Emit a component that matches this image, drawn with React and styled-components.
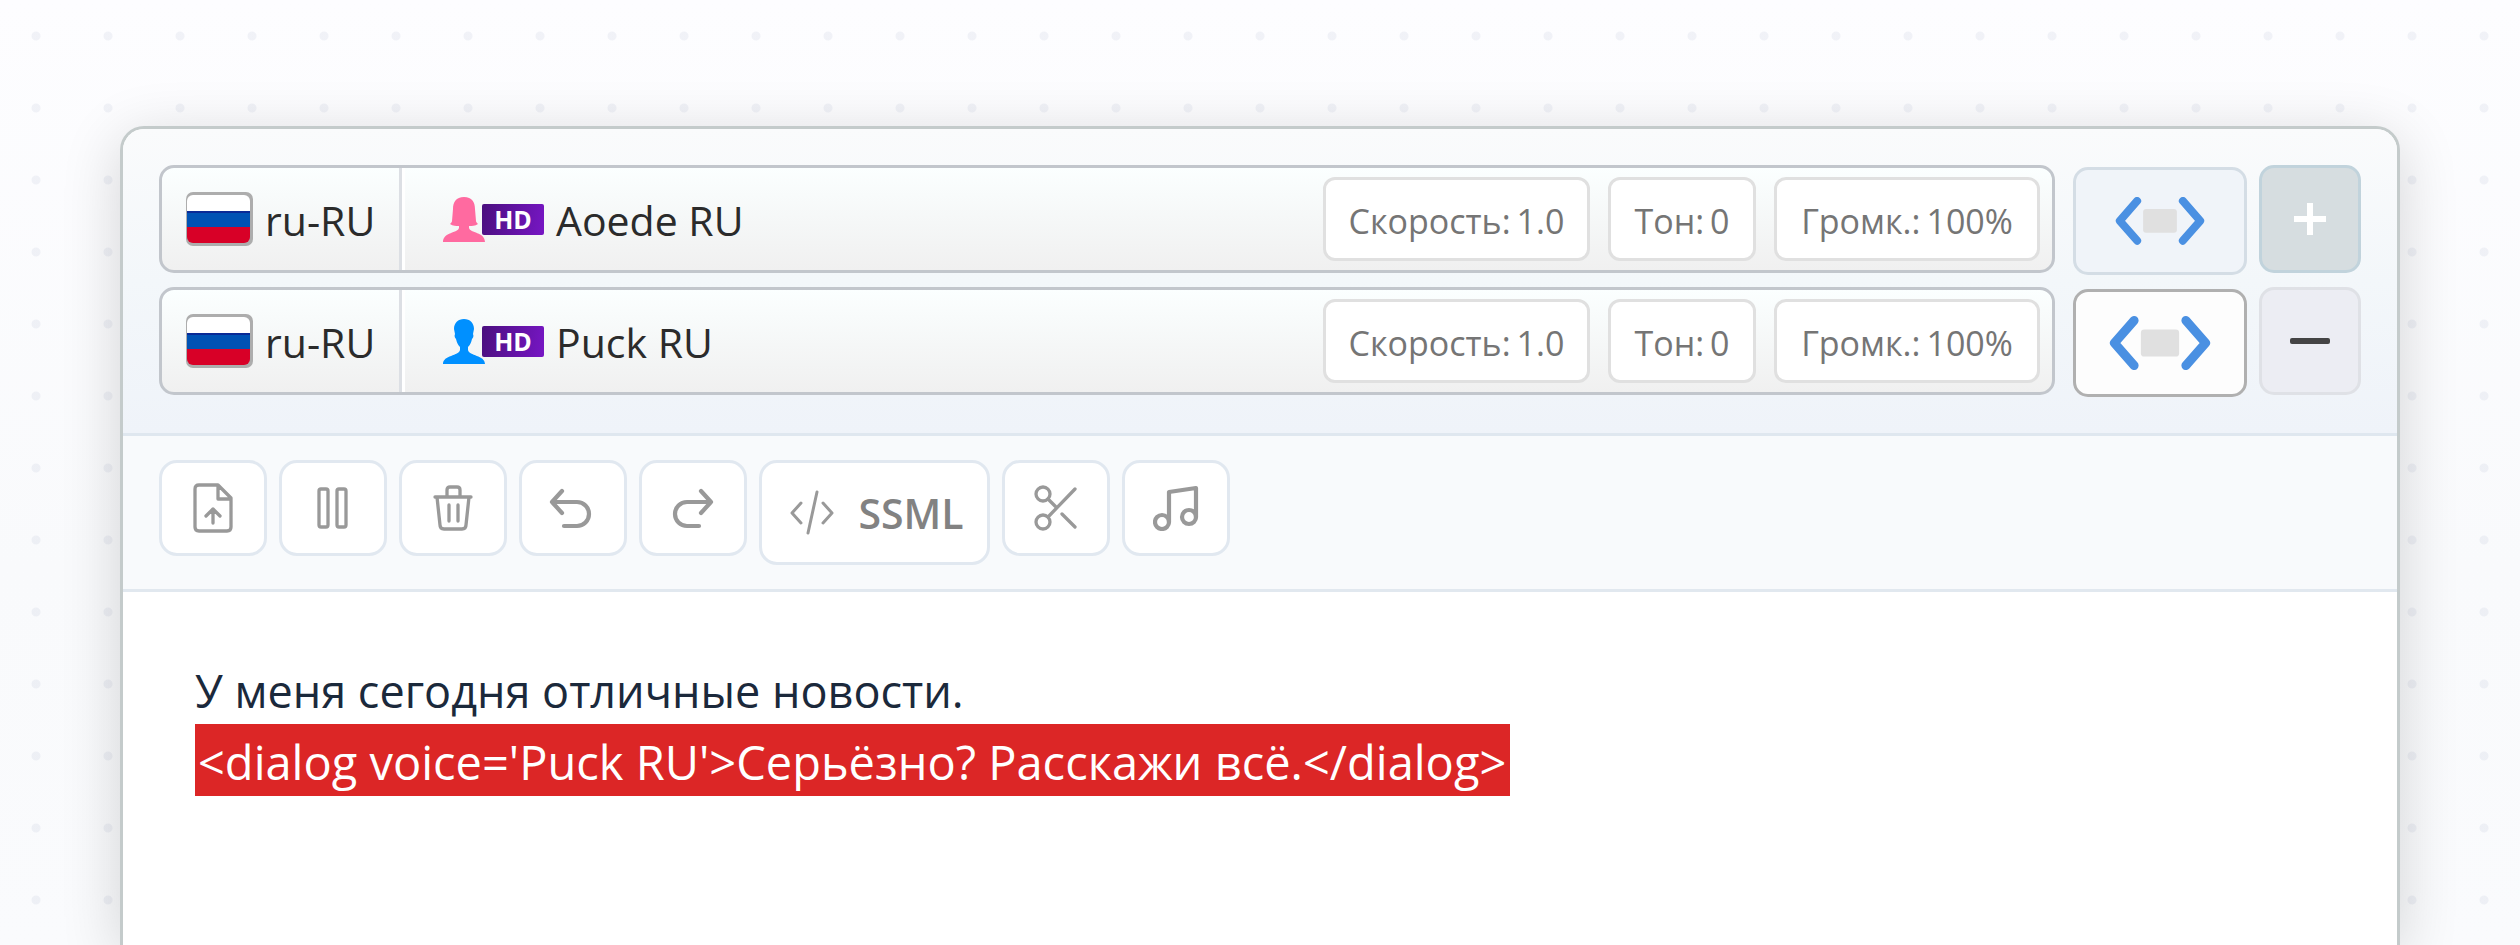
import styled, { createGlobalStyle } from "styled-components"

const GlobalStyle = createGlobalStyle`
  * {
    box-sizing: border-box;
  }
  body {
    margin: 0;
    font-family: "Open Sans", "Noto Sans", sans-serif;
    background: #fff;
  }
`
const Page = styled.div`
  min-height: 100vh;
  padding: 126px 120px 0;
  display: flex;
  background:
    radial-gradient(circle, rgba(100, 116, 160, 0.08) 4px, transparent 5px) 0 0 / 72px 72px,
    linear-gradient(180deg, #fdfdff 0%, #f9fafc 60%, #fafbfd 100%);
`
const Panel = styled.main`
  flex: 1;
  display: flex;
  flex-direction: column;
  border: 3px solid #c4cbcb;
  border-bottom: none;
  border-radius: 24px 24px 0 0;
  background: #fff;
  box-shadow: 0 12px 60px rgba(0, 0, 0, 0.16);
  overflow: hidden;
`
const Voices = styled.section`
  display: flex;
  flex-direction: column;
  gap: 12px;
  padding: 36px;
  border-bottom: 3px solid #dfe7ef;
  background: linear-gradient(180deg, #fafbfc 0%, #f3f7fa 50%, #eff3f9 100%);
`
const VoiceRow = styled.div`
  display: flex;
  align-items: flex-start;
`
const VoiceBox = styled.div`
  flex: 1;
  height: 108px;
  display: flex;
  align-items: stretch;
  margin-right: 18px;
  border: 3px solid #c2c6cc;
  border-radius: 15px;
  background: linear-gradient(180deg, #fbffff 0%, #f0f0f0 100%);
`
const Picker = styled.button`
  display: flex;
  align-items: center;
  padding: 0;
  border: none;
  background: none;
  font-family: inherit;
  font-size: 41px;
  line-height: 54px;
  color: #2b2b2b;
  cursor: pointer;
`
const Language = styled(Picker)`
  width: 240px;
  gap: 12px;
  padding-left: 24px;
  border-right: 3px solid #dcdfe4;
`
const Voice = styled(Picker)`
  flex: 1;
  gap: 12px;
  padding-left: 38px;
  border-left: 3px solid #fff;
`
const PickerText = styled.span`
  padding-top: 2px;
`
const Badges = styled.span`
  display: flex;
  align-items: center;
`
const HdBadge = styled.span`
  width: 62px;
  height: 31px;
  margin-left: -3px;
  border-radius: 2px;
  background: linear-gradient(100deg, #4a0f7e, #7716c4);
  color: #fff;
  font-size: 25px;
  line-height: 31px;
  font-weight: 700;
  text-align: center;
`
const Params = styled.div`
  display: flex;
  align-items: center;
  gap: 18px;
  padding-right: 12px;
`
const Param = styled.button`
  width: ${(props) => props.$width}px;
  height: 84px;
  padding: 3px 0 0;
  display: flex;
  align-items: center;
  justify-content: center;
  gap: 6px;
  border: 3px solid #e0e0e0;
  border-radius: 12px;
  background: #fff;
  color: #757575;
  font-family: inherit;
  font-size: 34px;
  line-height: 48px;
  white-space: nowrap;
  cursor: pointer;
`
const TagButton = styled.button`
  width: 174px;
  height: 108px;
  margin: 2px 12px 0 0;
  padding: 0;
  display: flex;
  align-items: center;
  justify-content: center;
  border: 3px solid ${(props) => (props.$active ? "#b0b0b0" : "#d4dde5")};
  border-radius: 15px;
  background: ${(props) => (props.$active ? "#fdfdfd" : "#f0f4f9")};
  cursor: pointer;
`
const RowButton = styled.button`
  width: 102px;
  height: 108px;
  padding: 0;
  display: flex;
  align-items: center;
  justify-content: center;
  border: 3px solid ${(props) => (props.$add ? "#c1d3dc" : "#dfe1e6")};
  border-radius: 15px;
  background: ${(props) => (props.$add ? "#d6dde0" : "#ecedf3")};
  cursor: pointer;
`
const Toolbar = styled.nav`
  display: flex;
  align-items: flex-start;
  gap: 12px;
  padding: 24px 36px;
  border-bottom: 3px solid #e1e8ef;
  background: #f8fafc;
`
const Tool = styled.button`
  width: ${(props) => (props.$wide ? 231 : 108)}px;
  height: ${(props) => (props.$wide ? 105 : 96)}px;
  padding: 0 0 0 ${(props) => (props.$wide ? 5 : 0)}px;
  display: flex;
  align-items: center;
  justify-content: center;
  gap: 24px;
  border: 3px solid #e1e8f0;
  border-radius: 18px;
  background: #fff;
  color: #828282;
  font-family: inherit;
  font-size: 41px;
  font-weight: 600;
  cursor: pointer;
`
const Editor = styled.div`
  flex: 1;
  padding: 60px 72px;
  font-size: 45px;
  line-height: 67px;
  color: #1b293b;
  outline: none;
`
const Line = styled.p`
  margin: 0;
  display: flex;
`
const LineText = styled.span`
  padding: 5px 0 0;
`
const DialogTag = styled.mark`
  padding: 5px 4px 0 3px;
  background: #dc2626;
  color: #fff;
  font-size: 47px;
`

const Flag = () => (
  <svg width="67" height="54" viewBox="0 0 67 54">
    <rect width="67" height="54" rx="7" fill="#adadad" />
    <clipPath id="flag">
      <rect x="1" y="3" width="63" height="48" rx="6" />
    </clipPath>
    <g clipPath="url(#flag)">
      <rect width="67" height="19" fill="#fff" />
      <rect y="19" width="67" height="17" fill="#0052b4" />
      <rect y="19" width="67" height="2" fill="#0a2a96" />
      <rect y="35" width="67" height="19" fill="#d80027" />
    </g>
  </svg>
)

const Female = () => (
  <svg width="42" height="46" viewBox="0 0 42 46">
    <path
      fill="#ff6aa0"
      d="M21 1c8 0 11 5 11 12l1 12c0 1 1 2 2 3-3 2-6 2-9 2v2c1 5 16 4 16 14H0c0-10 15-9 16-14v-2c-3 0-6 0-9-2 1-1 2-2 2-3l1-12C10 6 13 1 21 1z"
    />
  </svg>
)

const Male = () => (
  <svg width="42" height="46" viewBox="0 0 42 46">
    <path
      fill="#0090ff"
      d="M21 1c6 0 10 4 10 10l-1 5c1 2 0 4-1 5-1 4-2 6-4 8v3c1 6 17 5 17 14H0c0-9 16-8 17-14v-3c-2-2-3-4-4-8-1-1-2-3-1-5l-1-5C11 5 15 1 21 1z"
    />
  </svg>
)

const TagIcon = ({ size }) => (
  <svg width={size} height={size * 0.53} viewBox="0 0 90 48">
    <path
      d="M22 4 4.500 24 22 44M68 4 85.500 24 68 44"
      fill="none"
      stroke="#4a90e2"
      strokeWidth="8"
      strokeLinecap="round"
      strokeLinejoin="round"
    />
    <rect x="28" y="12" width="34" height="24" rx="3" fill="#e0e0e0" />
  </svg>
)

const Icon = ({ width = 40, height = 50, stroke = 3, children }) => (
  <svg
    width={width}
    height={height}
    viewBox={`0 0 ${width} ${height}`}
    fill="none"
    stroke="#999"
    strokeWidth={stroke}
    strokeLinecap="round"
    strokeLinejoin="round"
  >
    {children}
  </svg>
)

const tools = [
  {
    label: "Загрузить файл",
    icon: (
      <Icon stroke={3.3}>
        <path d="M25 2H6Q2 2 2 6V44Q2 48 6 48H34Q38 48 38 44V15ZV16H38M20 40V26M13 33l7-7 7 7" />
      </Icon>
    ),
  },
  {
    label: "Пауза",
    icon: (
      <Icon width={32} height={42} stroke={3.3}>
        <rect x="2" y="2" width="9" height="38" rx="2" />
        <rect x="20" y="2" width="9" height="38" rx="2" />
      </Icon>
    ),
  },
  {
    label: "Удалить",
    icon: (
      <Icon height={46} stroke={3.3}>
        <path d="M2 12H38M14 12V5Q14 2 17 2H24Q27 2 27 5V12M4 12l3 28q0 4 4 4H29q4 0 4-4l3-28M16 20V36M25 20V36" />
      </Icon>
    ),
  },
  {
    label: "Отменить",
    icon: (
      <Icon width={48} height={42} stroke={4.2}>
        <path d="M13 4 3 15l10 11M3 15H28a12 12 0 0 1 0 24H15" />
      </Icon>
    ),
  },
  {
    label: "Повторить",
    icon: (
      <Icon width={42} height={42} stroke={4.2}>
        <path d="M29 4l10 11-10 11M39 15H15a12 12 0 0 0 0 24H27" />
      </Icon>
    ),
  },
  {
    label: "SSML",
    text: "SSML",
    icon: (
      <Icon width={44} height={46}>
        <path d="M11 13 2 23l9 10M33 13l9 10-9 10M27 2 18 43" />
      </Icon>
    ),
  },
  {
    label: "Вырезать",
    icon: (
      <Icon width={44} height={46} stroke={3.3}>
        <circle cx="9" cy="9" r="7" />
        <circle cx="9" cy="37" r="7" />
        <path d="M14 32 41 4M14 14l8 8M28 29l13 13" />
      </Icon>
    ),
  },
  {
    label: "Музыка",
    icon: (
      <Icon width={46} height={46} stroke={4.2}>
        <circle cx="9" cy="37" r="7" />
        <circle cx="36" cy="32" r="7" />
        <path d="M16 37V7L43 3V32" />
      </Icon>
    ),
  },
]

const params = [
  { label: "Скорость:", value: "1.0", width: 267 },
  { label: "Тон:", value: "0", width: 148 },
  { label: "Громк.:", value: "100%", width: 266 },
]

const voices = [
  { name: "Aoede RU", female: true },
  { name: "Puck RU", active: true },
]

const App = () => {
  return (
    <Page>
      <GlobalStyle />
      <Panel>
        <Voices>
          {voices.map((voice, i) => (
            <VoiceRow key={voice.name}>
              <VoiceBox>
                <Language>
                  <Flag />
                  <PickerText>ru-RU</PickerText>
                </Language>
                <Voice>
                  <Badges>
                    {voice.female ? <Female /> : <Male />}
                    <HdBadge>HD</HdBadge>
                  </Badges>
                  <PickerText>{voice.name}</PickerText>
                </Voice>
                <Params>
                  {params.map((param) => (
                    <Param key={param.label} $width={param.width}>
                      <span>{param.label}</span>
                      <span>{param.value}</span>
                    </Param>
                  ))}
                </Params>
              </VoiceBox>
              <TagButton $active={voice.active} aria-label="Вставить тег">
                <TagIcon size={voice.active ? 102 : 90} />
              </TagButton>
              <RowButton $add={i === 0} aria-label={i === 0 ? "Добавить голос" : "Убрать голос"}>
                {i === 0 ? (
                  <svg width="32" height="32" viewBox="0 0 32 32">
                    <path d="M0 16H32M16 0V32" stroke="#fff" strokeWidth="6" />
                  </svg>
                ) : (
                  <svg width="40" height="6" viewBox="0 0 40 6">
                    <rect width="40" height="6" rx="2" fill="#444" />
                  </svg>
                )}
              </RowButton>
            </VoiceRow>
          ))}
        </Voices>
        <Toolbar>
          {tools.map((tool) => (
            <Tool key={tool.label} $wide={!!tool.text} aria-label={tool.label}>
              {tool.icon}
              {tool.text}
            </Tool>
          ))}
        </Toolbar>
        <Editor contentEditable suppressContentEditableWarning role="textbox" aria-label="Текст" spellCheck={false}>
          <Line>
            <LineText>У меня сегодня отличные новости.</LineText>
          </Line>
          <Line>
            <DialogTag>{"<dialog voice='Puck RU'>Серьёзно? Расскажи всё.</dialog>"}</DialogTag>
          </Line>
        </Editor>
      </Panel>
    </Page>
  )
}

export default App
